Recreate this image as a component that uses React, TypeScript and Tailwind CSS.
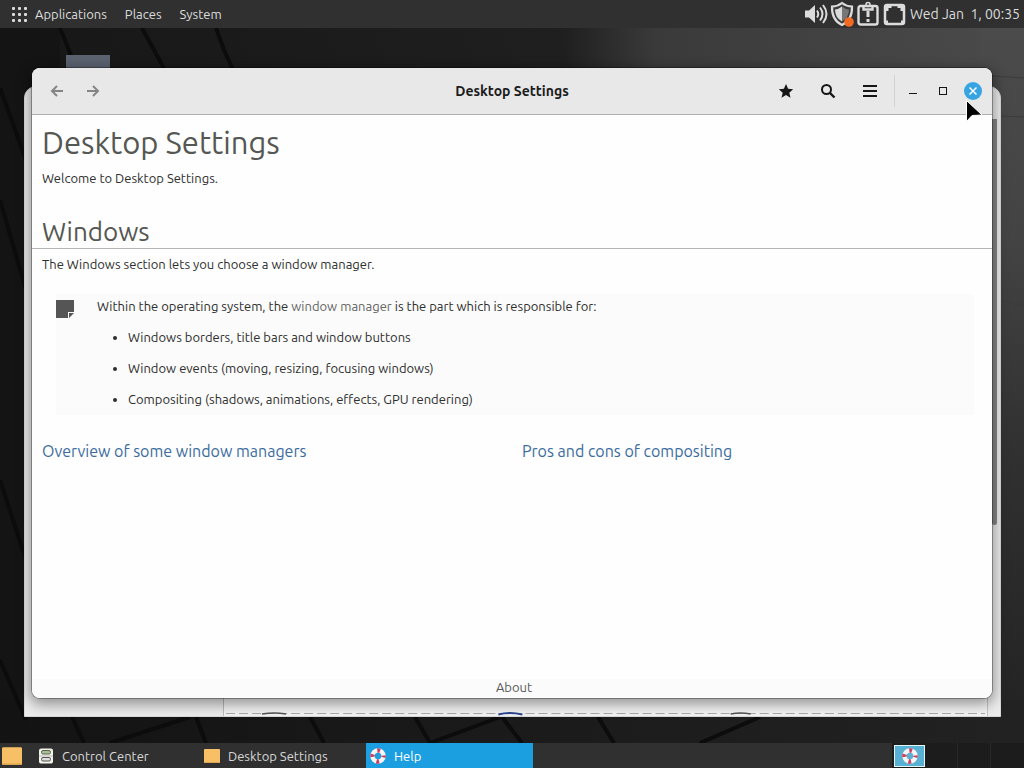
import type { ReactNode } from "react";

function Wallpaper() {
  return (
    <svg
      className="absolute inset-0 h-full w-full"
      viewBox="0 28 1024 715"
      preserveAspectRatio="none"
      aria-hidden="true"
    >
      <defs>
        <linearGradient id="right-edge" x1="0" y1="0" x2="0" y2="1">
          <stop offset="0" stopColor="#4b4b4b" />
          <stop offset="0.3" stopColor="#434343" />
          <stop offset="0.6" stopColor="#303030" />
          <stop offset="1" stopColor="#222222" />
        </linearGradient>
        <linearGradient id="top-edge" x1="0" y1="0" x2="1" y2="0">
          <stop offset="0" stopColor="#171717" />
          <stop offset="0.55" stopColor="#1f1f1f" />
          <stop offset="0.64" stopColor="#3a3a3a" />
          <stop offset="1" stopColor="#4b4b4b" />
        </linearGradient>
        <linearGradient id="bottom-edge" x1="0" y1="0" x2="1" y2="0">
          <stop offset="0" stopColor="#131313" />
          <stop offset="1" stopColor="#222222" />
        </linearGradient>
      </defs>
      <rect x="0" y="28" width="1024" height="715" fill="#141414" />
      <rect x="0" y="28" width="1024" height="120" fill="url(#top-edge)" />
      <rect x="0" y="28" width="60" height="715" fill="#141414" />
      <rect x="980" y="28" width="44" height="715" fill="url(#right-edge)" />
      <rect x="0" y="700" width="1024" height="43" fill="url(#bottom-edge)" />
      <g fill="none" stroke="#0c0c0c" strokeWidth="4">
        <path d="M60 28 80 78M142 28 180 98M216 28 224 50 246 98" />
        <path d="M0 88 26 160M0 200 26 290M0 480 26 560M0 660 26 720" />
        <path d="M72 717 84 743M110 743 190 717M196 717 206 743M310 717 324 743" />
        <path d="M415 717 430 743 500 717M502 717 522 743M598 717 614 743" />
        <path d="M700 743 760 717" />
      </g>
      <path d="M926 72 1024 78M1000 116 1024 117M1000 300 1024 306" stroke="#3c3c3c" />
      <rect x="66" y="55" width="44" height="20" fill="#5b6270" />
    </svg>
  );
}

function AppsIcon() {
  const steps = [1, 7, 13];
  return (
    <svg width="16" height="16" viewBox="0 0 16 16" fill="#dcdcdc" aria-hidden="true">
      {steps.map((y) => steps.map((x) => <rect key={`${x}-${y}`} x={x} y={y} width="3" height="3" rx="1" />))}
    </svg>
  );
}

function TrayIcons() {
  return (
    <div className="flex items-center gap-0.5">
      <svg width="24" height="24" viewBox="0 0 24 24" fill="none" stroke="#dcdcdc" strokeWidth="2" role="img" aria-label="Volume">
        <path d="M1 8.500h4l6-5.500v18l-6-5.500H1z" fill="#dcdcdc" stroke="none" />
        <path d="M13 8.500q2.500 3.500 0 7M16 5.500q5 6.500 0 13M19 3q7 9 0 18" />
      </svg>
      <svg width="24" height="26" viewBox="0 0 24 26" role="img" aria-label="Updates">
        <path d="M12 2Q7.500 5.500 2 5.500 1.500 19 12 24 22.500 19 22 5.500 16.500 5.500 12 2Z" fill="#3a3a3a" stroke="#dcdcdc" strokeWidth="2.200" />
        <path d="M12 5.500Q9 8 5 8.500 5 16.500 12 20.500Z" fill="#dcdcdc" />
        <path d="M12 5.500Q15 8 19 8.500 19 16.500 12 20.500Z" fill="#777777" />
        <circle cx="19" cy="21" r="4.800" fill="#f36b22" />
      </svg>
      <svg width="24" height="26" viewBox="0 0 24 26" fill="none" stroke="#dcdcdc" strokeWidth="2.400" role="img" aria-label="System reports">
        <rect x="2.500" y="5" width="19" height="18.500" rx="2" />
        <path d="M7.500 5v3.500h9V5" />
        <circle cx="12" cy="3.500" r="2" strokeWidth="1.500" />
        <path d="M12 10v6M12 18v3" strokeWidth="3" />
      </svg>
      <svg width="24" height="26" viewBox="0 0 24 26" fill="none" stroke="#dcdcdc" role="img" aria-label="Network">
        <rect x="3" y="4" width="19" height="19" rx="2" strokeWidth="2.500" />
        <path d="M4 4h17v6h-2.500V7h-3V5h-6v2h-3v3H4zM4 19.500h2v2.500H4zM19 19.500h2v2.500h-2z" fill="#dcdcdc" stroke="none" />
      </svg>
    </div>
  );
}

function Lifebuoy({ size }: { size: number }) {
  return (
    <svg width={size} height={size} viewBox="0 0 16 16" fill="none" aria-hidden="true">
      <circle cx="8" cy="8" r="5.500" stroke="#f5f5f5" strokeWidth="4.500" />
      <circle cx="8" cy="8" r="5.500" stroke="#c9415f" strokeWidth="4.500" strokeDasharray="2.800 5.840" strokeDashoffset="1.400" />
    </svg>
  );
}

function CabinetIcon() {
  return (
    <svg width="16" height="16" viewBox="0 0 16 16" aria-hidden="true">
      <rect x="1" y="0.500" width="14" height="15" rx="2" fill="#f3f3ea" />
      <rect x="3.500" y="2.500" width="9" height="3.500" rx="1.500" fill="#a9bd9b" stroke="#55664b" />
      <rect x="3.500" y="9.500" width="9" height="3.500" rx="1.500" fill="#ddd" stroke="#555" />
      <path d="M1 8h14" stroke="#bbb" />
    </svg>
  );
}

function FolderIcon({ size }: { size: number }) {
  return (
    <svg width={size} height={size} viewBox="0 0 16 16" aria-hidden="true">
      <rect y="1" width="16" height="14" rx="1" fill="#f7c067" />
      <path d="M0 14.500h16" stroke="#e0a64c" />
    </svg>
  );
}

function HeaderButton({ label, className, children }: { label: string; className: string; children: ReactNode }) {
  return (
    <button type="button" aria-label={label} className={`flex h-8 items-center justify-center ${className}`}>
      {children}
    </button>
  );
}

function TitleBar() {
  return (
    <header className="grid h-[47px] shrink-0 grid-cols-[1fr_auto_1fr] items-center border-b border-[#b0b0b0] bg-[#e8e8e8]">
      <div className="flex pl-[7px]">
        <HeaderButton label="Back" className="w-9">
          <svg width="14" height="14" viewBox="0 0 14 14" fill="none" stroke="#858585" strokeWidth="2">
            <path d="M13 7H2M7 2 2 7l5 5" />
          </svg>
        </HeaderButton>
        <HeaderButton label="Forward" className="w-9">
          <svg width="14" height="14" viewBox="0 0 14 14" fill="none" stroke="#858585" strokeWidth="2">
            <path d="M1 7h11M7 2l5 5-5 5" />
          </svg>
        </HeaderButton>
      </div>
      <h1 className="text-sm leading-5 font-bold text-[#1c1c1c]">Desktop Settings</h1>
      <div className="flex items-center justify-end pr-1">
        <HeaderButton label="Bookmarks" className="w-[42px]">
          <svg width="16" height="16" viewBox="0 0 16 16" fill="#161616">
            <path d="m8 1 2.100 4.800 5.100.5-3.900 3.400 1.200 5.100L8 12.100l-4.500 2.700 1.200-5.100L.8 6.300l5.100-.5z" />
          </svg>
        </HeaderButton>
        <HeaderButton label="Search" className="w-[42px]">
          <svg width="16" height="16" viewBox="0 0 16 16" fill="none" stroke="#161616" strokeWidth="2">
            <circle cx="6.500" cy="6.500" r="4.500" />
            <path d="m9.500 9.500 5 5" strokeWidth="2.400" />
          </svg>
        </HeaderButton>
        <HeaderButton label="Menu" className="w-[42px]">
          <svg width="16" height="16" viewBox="0 0 16 16" fill="#161616">
            <path d="M1 2h14v2H1zM1 7h14v2H1zM1 12h14v2H1z" />
          </svg>
        </HeaderButton>
        <div className="ml-[3px] flex border-l border-[#d2d2d2] pl-[3px]">
          <HeaderButton label="Minimize" className="w-[30px]">
            <svg width="10" height="10" viewBox="0 0 10 10" fill="#161616">
              <path d="M1 7h8v1H1z" />
            </svg>
          </HeaderButton>
          <HeaderButton label="Maximize" className="w-[30px]">
            <svg width="10" height="10" viewBox="0 0 10 10" fill="none" stroke="#161616">
              <rect x="1.500" y="1.500" width="7" height="7" />
            </svg>
          </HeaderButton>
          <HeaderButton label="Close" className="w-[30px]">
            <svg width="18" height="18" viewBox="0 0 18 18">
              <circle cx="9" cy="9" r="9" fill="#36a3e3" />
              <path d="m5.500 5.500 7 7m0-7-7 7" stroke="#fff" strokeWidth="1.500" />
            </svg>
          </HeaderButton>
        </div>
      </div>
    </header>
  );
}

const duties = [
  "Windows borders, title bars and window buttons",
  "Window events (moving, resizing, focusing windows)",
  "Compositing (shadows, animations, effects, GPU rendering)",
];

function HelpWindow() {
  return (
    <section className="absolute inset-x-8 top-10 bottom-[45px] flex flex-col overflow-hidden rounded-lg bg-[#fefefe] shadow-[0_4px_14px_2px_rgba(0,0,0,0.4),0_0_0_1px_rgba(0,0,0,0.3)]">
      <TitleBar />
      <main className="min-h-0 flex-1 text-[13px] leading-5 text-[#2e2e2e]">
        <h2 className="px-2.5 pt-[7px] text-[31px] leading-[42px] text-[#555753]">Desktop Settings</h2>
        <p className="px-2.5 pt-1">Welcome to Desktop Settings.</p>
        <h3 className="mt-7 border-b border-[#b4b4b4] px-2.5 text-[26px] leading-8 text-[#555753]">Windows</h3>
        <p className="px-2.5 pt-[5px]">The Windows section lets you choose a window manager.</p>
        <div className="mt-5 mr-[18px] ml-6 flex gap-[23px] bg-[#fbfbfb] pt-0.5 pb-1.5">
          <svg className="mt-1 shrink-0" width="18" height="18" viewBox="0 0 18 18" fill="#555555" aria-hidden="true">
            <path d="M0 0h18v12h-6v6H0zM13 13h5l-5 5z" />
          </svg>
          <div>
            <p>
              Within the operating system, the <em className="text-[#666666] not-italic">window manager</em> is the part
              which is responsible for:
            </p>
            <ul className="list-disc pl-[31px]">
              {duties.map((duty) => (
                <li key={duty} className="mt-[11px]">
                  {duty}
                </li>
              ))}
            </ul>
          </div>
        </div>
        <nav className="mt-6 grid grid-cols-2 text-base leading-6 text-[#3b6ca0]">
          <a href="#managers" className="px-2.5">Overview of some window managers</a>
          <a href="#compositing" className="px-2.5">Pros and cons of compositing</a>
        </nav>
      </main>
      <footer className="flex h-[19px] shrink-0 items-start justify-center bg-[#fbfbfb] pl-1 text-[13px] leading-4 text-[#5a5a5a]">
        <a href="#about">About</a>
      </footer>
    </section>
  );
}

function BackWindow() {
  return (
    <section
      aria-label="Control Center"
      className="absolute top-[58px] right-[23px] bottom-[26px] left-6 flex flex-col rounded-t-xl border border-[#d8d8d8] bg-[#ececec]"
    >
      <div className="h-8 shrink-0" />
      <div className="flex flex-1">
        <div className="w-[199px] border-r border-[#bcbcbc]" />
        <div className="flex flex-1 flex-col justify-end border-r border-[#c4c4c4] bg-[#f3f3f3]">
          <svg className="h-1 w-full" viewBox="0 0 762 4" preserveAspectRatio="none" aria-hidden="true">
            <path d="M2 1.500h758" stroke="#aaaaaa" strokeDasharray="9 4" />
            <path d="M38 2q12-2 24 0M506 2q10-2 20 0" stroke="#555555" strokeWidth="1.500" fill="none" />
            <path d="M274 2.500q11-3 24 0" stroke="#29458f" strokeWidth="2" fill="none" />
          </svg>
        </div>
        <div className="w-3">
          <div className="ml-1 h-[68%] w-[5px] rounded-b-sm bg-[#888888]" />
        </div>
      </div>
    </section>
  );
}

function Task({ icon, label, active }: { icon: ReactNode; label: string; active?: boolean }) {
  return (
    <button
      type="button"
      className={`flex items-center gap-2 pl-1 text-left ${active ? "w-[167px] bg-[#1b9fe0] text-white" : "w-[166px]"}`}
    >
      {icon}
      <span>{label}</span>
    </button>
  );
}

export default function App() {
  return (
    <div className="flex min-h-screen flex-col bg-[#151515] font-['Ubuntu','Noto_Sans',sans-serif] text-[13px] leading-5">
      <nav className="flex h-7 shrink-0 items-center bg-[#303030] pr-1 pl-[11px] text-[#dcdcdc]">
        <div className="flex gap-[18px]">
          <button type="button" className="flex items-center gap-2">
            <AppsIcon />
            Applications
          </button>
          <button type="button">Places</button>
          <button type="button">System</button>
        </div>
        <div className="ml-auto flex items-center gap-1">
          <TrayIcons />
          <time className="text-sm whitespace-pre">Wed Jan  1, 00:35</time>
        </div>
      </nav>
      <div className="relative flex-1 overflow-hidden">
        <Wallpaper />
        <BackWindow />
        <HelpWindow />
        <svg className="absolute top-[71px] right-10 h-6 w-5" viewBox="0 0 20 24" aria-hidden="true">
          <path d="M2.500 1.500v21l5.500-6 10-.5z" fill="#000" stroke="#fff" strokeWidth="1" />
        </svg>
      </div>
      <div className="flex h-[25px] shrink-0 bg-[#303030] text-[#d8d8d8]">
        <button type="button" aria-label="Show desktop" className="flex w-[34px] items-center pl-0.5">
          <FolderIcon size={20} />
        </button>
        <Task icon={<CabinetIcon />} label="Control Center" />
        <Task icon={<FolderIcon size={16} />} label="Desktop Settings" />
        <Task icon={<Lifebuoy size={16} />} label="Help" active />
        <div className="ml-auto grid w-[132px] grid-cols-4 bg-[#1c1c1c]">
          <button type="button" aria-label="Workspace 1" className="mt-0.5 mb-px ml-0.5 flex items-center justify-center border border-[#e4f4fb] bg-[#58b0d2]">
            <Lifebuoy size={16} />
          </button>
          <button type="button" aria-label="Workspace 2" className="border-r border-[#282828]" />
          <button type="button" aria-label="Workspace 3" className="border-r border-[#282828]" />
          <button type="button" aria-label="Workspace 4" />
        </div>
      </div>
    </div>
  );
}
